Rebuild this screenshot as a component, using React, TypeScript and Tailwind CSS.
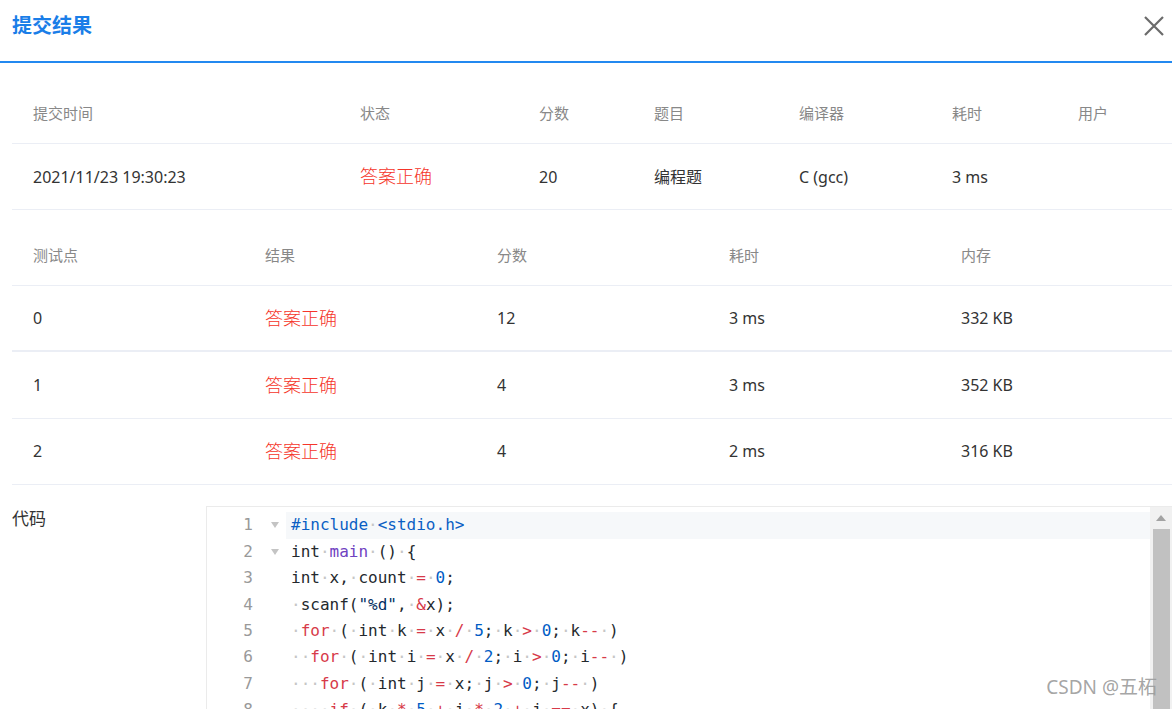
import React from 'react';

const sans = { fontFamily: '"Noto Sans", "Noto Sans CJK SC", sans-serif' };
const mono = { fontFamily: '"DejaVu Sans Mono", "Liberation Mono", monospace' };

const summaryHead = ['提交时间', '状态', '分数', '题目', '编译器', '耗时', '用户'];
const summaryRow = ['2021/11/23 19:30:23', '答案正确', '20', '编程题', 'C (gcc)', '3 ms', ''];

const caseHead = ['测试点', '结果', '分数', '耗时', '内存'];
const cases = [
  ['0', '答案正确', '12', '3 ms', '332 KB'],
  ['1', '答案正确', '4', '3 ms', '352 KB'],
  ['2', '答案正确', '4', '2 ms', '316 KB'],
];

const code = [
  '#include <stdio.h>',
  'int main () {',
  'int x, count = 0;',
  ' scanf("%d", &x);',
  ' for ( int k = x / 5; k > 0; k-- )',
  '  for ( int i = x / 2; i > 0; i-- )',
  '   for ( int j = x; j > 0; j-- )',
  '    if ( k * 5 + i * 2 + j == x) {',
  '     count++;',
  '    }',
];

// rough highlighter for the visible lines
const colorize = (line: string, idx: number) => {
  if (line.startsWith('#')) {
    return line.split(/( )/).map((t, i) =>
      t === ' ' ? (
        <span key={i} className="text-[#c6c6c6]">·</span>
      ) : (
        <span key={i} className="text-[#0b5fc4]">{t}</span>
      )
    );
  }
  const parts = line.match(/"[^"]*"| |[A-Za-z_]\w*|\d+|--|\+\+|==|[=<>+\-*/&]|./g) || [];
  return parts.map((t, i) => {
    let cls = 'text-[#24292e]';
    if (t === ' ') return <span key={idx + '-' + i} className="text-[#c6c6c6]">·</span>;
    if (t === 'for' || t === 'if' || t === 'return') cls = 'text-[#d73a49]';
    else if (t === 'main') cls = 'text-[#6f42c1]';
    else if (/^\d+$/.test(t)) cls = 'text-[#005cc5]';
    else if (t.startsWith('"')) cls = 'text-[#032f62]';
    else if (/^(--|\+\+|==|[=<>+\-*/&])$/.test(t)) cls = 'text-[#d73a49]';
    return (
      <span key={idx + '-' + i} className={cls}>
        {t}
      </span>
    );
  });
};

const App = () => {
  return (
    <div className="relative h-[709px] overflow-hidden bg-white text-[#333]" style={sans}>
      {/* header */}
      <div className="flex h-[63px] items-start justify-between border-b-2 border-[#2389f0] pl-3 pr-[6px] pt-[12px]">
        <h1 className="text-[20px] font-bold leading-[28px] text-[#1a7ee8]">提交结果</h1>
        <button className="mr-[1px] mt-[3px] text-[#666]">
          <svg width="22" height="22" viewBox="0 0 22 22">
            <path d="M2 2 L20 20 M20 2 L2 20" stroke="#6b6b6b" strokeWidth="2.2" fill="none" />
          </svg>
        </button>
      </div>

      {/* summary */}
      <div className="ml-3 mt-[21px]">
        <div className="grid h-[60px] grid-cols-[327px_179px_115px_145px_153px_126px_1fr] items-center border-b border-[#ebeef5] text-[15px] text-[#888]">
          {summaryHead.map((h) => (
            <div key={h} className="pl-[21px]">{h}</div>
          ))}
        </div>
        <div className="grid h-[66px] grid-cols-[327px_179px_115px_145px_153px_126px_1fr] items-center border-b border-[#ebeef5] text-[16px] text-[#333]">
          {summaryRow.map((c, i) => (
            <div key={i} className={i === 1 ? 'pl-[21px] text-[18px] font-light text-[#f5352a]' : 'pl-[21px]'}>
              {c}
            </div>
          ))}
        </div>
      </div>

      {/* test points */}
      <div className="ml-3 mt-[16px]">
        <div className="grid h-[60px] grid-cols-5 items-center border-b border-[#ebeef5] text-[15px] text-[#888]">
          {caseHead.map((h) => (
            <div key={h} className="pl-[21px]">{h}</div>
          ))}
        </div>
        {cases.map((row, r) => (
          <div
            key={r}
            className={
              r === 0
                ? 'grid h-[66.4px] grid-cols-5 items-center border-b-2 border-[#ebeef5] text-[16px]'
                : 'grid h-[66.4px] grid-cols-5 items-center border-b border-[#ebeef5] text-[16px]'
            }
          >
            {row.map((c, i) => (
              <div key={i} className={i === 1 ? 'pl-[21px] text-[18px] font-light text-[#f5352a]' : 'pl-[21px]'}>
                {c}
              </div>
            ))}
          </div>
        ))}
      </div>

      {/* code */}
      <div className="mt-[21px] flex">
        <div className="w-[206px] shrink-0 pl-3 pt-[1px] text-[17px] leading-[24px] text-[#333]">代码</div>
        <div className="flex flex-1 border-l border-t border-[#ebebeb]">
          <div className="flex-1 pt-[5px]" style={mono}>
            {code.map((line, i) => (
              <div key={i} className="flex h-[26.4px] items-center text-[16px]">
                <div className="w-[46px] text-right text-[#999]">{i + 1}</div>
                <div className="flex w-[33px] justify-center pl-[10px]">
                  {i < 2 && (
                    <svg width="8" height="6" viewBox="0 0 8 6">
                      <path d="M0 0 L8 0 L4 6 Z" fill="#c4c4c4" />
                    </svg>
                  )}
                </div>
                <div className={i === 0 ? 'flex h-full flex-1 items-center whitespace-pre bg-[#f6f8fa] pl-[5px]' : 'flex h-full flex-1 items-center whitespace-pre pl-[5px]'}>
                  {colorize(line, i)}
                </div>
              </div>
            ))}
          </div>
          <div className="flex w-[22px] flex-col items-center bg-[#f1f1f1] pt-[8px]">
            <svg width="10" height="6" viewBox="0 0 10 6">
              <path d="M0 6 L10 6 L5 0 Z" fill="#a3a3a3" />
            </svg>
            <div className="mt-[8px] h-[400px] w-[17px] bg-[#c1c1c1]" />
          </div>
        </div>
      </div>

      <div className="absolute bottom-[8px] right-[15px] text-[19px] text-[#9a9a9a]/90">CSDN @五柘</div>
    </div>
  );
};

export default App;
